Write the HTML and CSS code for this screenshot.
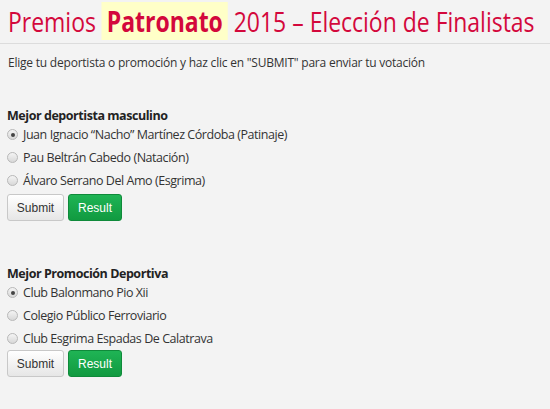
FILE: index.html
```html
<!DOCTYPE html>
<html lang="es">
<head>
<meta charset="utf-8">
<link rel="stylesheet" href="styles.css">
</head>
<body>
<header class="head">
  <h1 class="title">Premios <span class="hl">Patronato</span> 2015 – Elección de Finalistas</h1>
</header>
<p class="intro">Elige tu deportista o promoción y haz clic en "SUBMIT" para enviar tu votación</p>

<form class="poll">
  <div class="q">Mejor deportista masculino</div>
  <label class="opt"><input type="radio" name="a" checked><span>Juan Ignacio “Nacho” Martínez Córdoba (Patinaje)</span></label>
  <label class="opt"><input type="radio" name="a"><span>Pau Beltrán Cabedo (Natación)</span></label>
  <label class="opt"><input type="radio" name="a"><span>Álvaro Serrano Del Amo (Esgrima)</span></label>
  <div class="btns"><button type="button" class="btn submit">Submit</button><button type="button" class="btn result">Result</button></div>
</form>

<form class="poll second">
  <div class="q">Mejor Promoción Deportiva</div>
  <label class="opt"><input type="radio" name="b" checked><span>Club Balonmano Pio Xii</span></label>
  <label class="opt"><input type="radio" name="b"><span>Colegio Público Ferroviario</span></label>
  <label class="opt"><input type="radio" name="b"><span>Club Esgrima Espadas De Calatrava</span></label>
  <div class="btns"><button type="button" class="btn submit">Submit</button><button type="button" class="btn result">Result</button></div>
</form>
</body>
</html>
```
FILE: styles.css
```css
html, body { margin: 0; padding: 0; }
body {
  background: #f3f3f3;
  font-family: "Open Sans", sans-serif;
  color: #333;
  width: 550px;
  height: 409px;
  overflow: hidden;
}
.head {
  border-bottom: 1px solid #dcdcdc;
  padding: 3px 0 4px 8px;
  overflow: hidden;
}
.title {
  margin: 0;
  font-size: 28px;
  font-weight: 400;
  line-height: 36px;
  color: #d3083c;
  white-space: nowrap;
  transform: scaleX(0.82);
  transform-origin: left center;
}
.hl {
  background: #ffffc8;
  font-weight: 700;
  padding: 0 6px;
}
.intro {
  margin: 0;
  padding: 10px 0 0 8px;
  font-size: 12px;
  line-height: 17px;
  letter-spacing: -0.22px;
  color: #333;
}
.poll {
  padding: 0 7px;
  margin: 36px 0 0;
}
.poll.second { margin-top: 44px; }
.q {
  font-weight: 700;
  font-size: 12.5px;
  line-height: 17px;
  letter-spacing: -0.45px;
  color: #222;
}
.opt {
  display: flex;
  align-items: center;
  gap: 5px;
  font-size: 12.5px;
  line-height: 23px;
  height: 23px;
  letter-spacing: -0.45px;
  color: #333;
}
.poll .q + .opt { margin-top: -1px; }
.opt input {
  appearance: none;
  -webkit-appearance: none;
  margin: 0;
  width: 11px;
  height: 11px;
  border-radius: 50%;
  border: 1px solid #b8b8b8;
  background: linear-gradient(#f4f4f4, #d8d8d8);
  display: grid;
  place-items: center;
}
.opt input:checked::after {
  content: "";
  width: 4px;
  height: 4px;
  border-radius: 50%;
  background: #444;
}
.btns {
  display: flex;
  gap: 4px;
  margin-top: 2px;
}
.second .btns { margin-top: 0; }
.btn {
  font-family: "Liberation Sans", Arial, sans-serif;
  font-size: 12px;
  height: 27px;
  border-radius: 3px;
  padding: 0;
  cursor: pointer;
}
.submit {
  width: 57px;
  background: linear-gradient(#ffffff, #e6e6e6);
  border: 1px solid #c8c8c8;
  color: #333;
}
.result {
  width: 54px;
  background: linear-gradient(#1fb455, #119a40);
  border: 1px solid #0f8a3a;
  color: #fff;
}
```
